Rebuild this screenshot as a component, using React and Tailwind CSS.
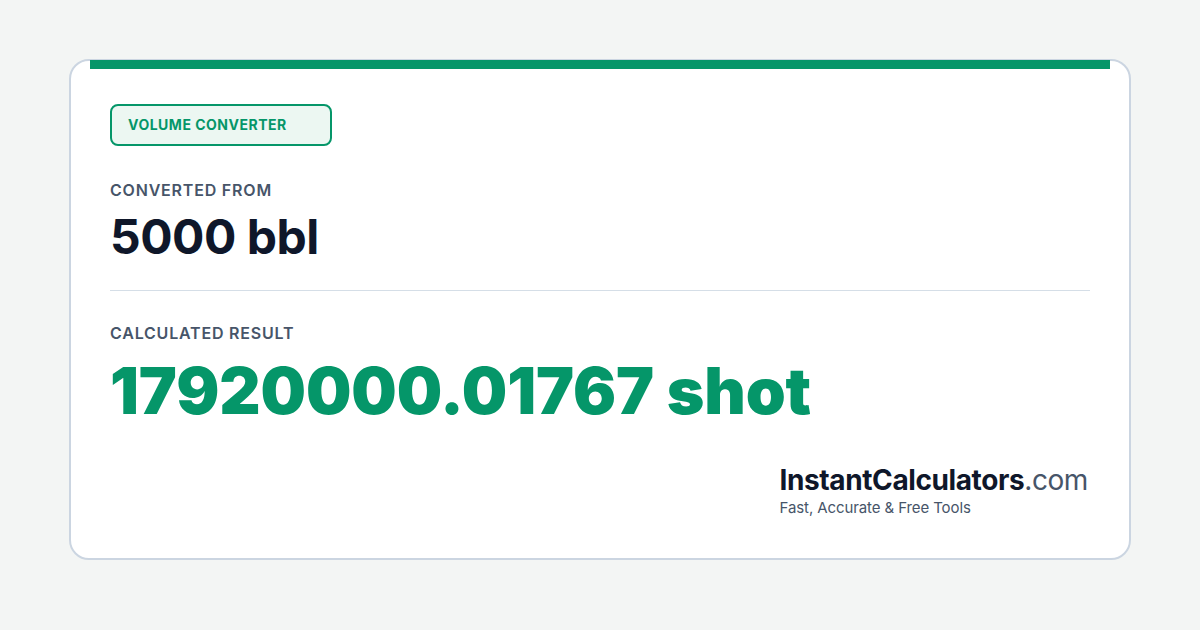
import React from 'react';

const App = () => {
  return (
    <div className="w-[1200px] h-[630px] bg-[#f3f5f4] pt-[59px] pl-[69px]" style={{ fontFamily: 'Inter, "Noto Sans", sans-serif' }}>
      <div className="relative w-[1062px] h-[501px] bg-white border-2 border-[#cbd5e1] rounded-[20px] px-[39px] pt-[43px] flex flex-col">
        {/* accent bar */}
        <div className="absolute top-[-1px] left-[19px] right-[19px] h-[9px] bg-[#059669]" />

        <div className="w-[222px] h-[42px] flex items-center pl-[16px] border-2 border-[#059669] bg-[#ecf7f2] rounded-lg text-[#059669] text-sm font-bold tracking-[0.5px]">
          VOLUME CONVERTER
        </div>

        <div className="mt-[32px] text-base leading-6 font-semibold text-[#475569] tracking-[0.8px]">CONVERTED FROM</div>
        <div className="mt-[11px] text-[48px] leading-none font-bold text-[#0f172a] tracking-[-0.5px]">5000 bbl</div>

        <div className="mt-[29px] h-px bg-[#d5dee7]" />

        <div className="mt-[30px] text-base leading-6 font-semibold text-[#475569] tracking-[0.8px]">CALCULATED RESULT</div>
        <div className="mt-[14px] text-[64px] leading-none font-black text-[#059669] tracking-[-0.1px]">17920000.01767 shot</div>

        <div className="mt-[41px] self-end mr-[2px]">
          <div className="text-[28px] leading-8 text-[#0f172a] tracking-[-0.4px]">
            <span className="font-bold">InstantCalculators</span>
            <span className="font-normal text-[#475569]">.com</span>
          </div>
          <div className="mt-[2px] text-[15px] leading-5 text-[#475569] tracking-[-0.1px]">Fast, Accurate &amp; Free Tools</div>
        </div>
      </div>
    </div>
  );
};

export default App;
